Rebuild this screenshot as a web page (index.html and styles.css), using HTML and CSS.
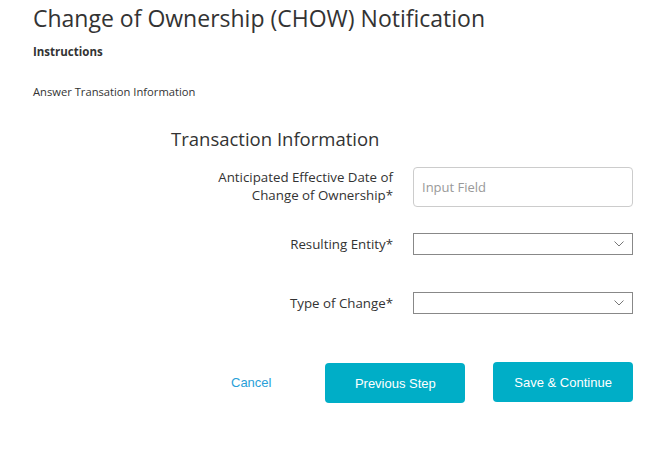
FILE: index.html
```html
<!DOCTYPE html>
<html>
<head>
<meta charset="utf-8">
<link rel="stylesheet" href="styles.css">
</head>
<body>
<div class="page">
  <h1 class="title">Change of Ownership (CHOW) Notification</h1>
  <div class="instructions">Instructions</div>
  <div class="subtitle">Answer Transation Information</div>
  <div class="form">
    <h2 class="section">Transaction Information</h2>
    <div class="row row-input">
      <label class="label">Anticipated Effective Date of<br>Change of Ownership*</label>
      <div class="field"><input class="input" type="text" placeholder="Input Field"></div>
    </div>
    <div class="row row-select">
      <label class="label">Resulting Entity*</label>
      <div class="field"><div class="select"><svg class="chev" width="10" height="6" viewBox="0 0 10 6"><path d="M0.5 0.5 L5 5 L9.5 0.5" fill="none" stroke="#777" stroke-width="1"/></svg></div></div>
    </div>
    <div class="row row-select">
      <label class="label">Type of Change*</label>
      <div class="field"><div class="select"><svg class="chev" width="10" height="6" viewBox="0 0 10 6"><path d="M0.5 0.5 L5 5 L9.5 0.5" fill="none" stroke="#777" stroke-width="1"/></svg></div></div>
    </div>
    <div class="actions">
      <a class="cancel">Cancel</a>
      <button class="btn btn-prev">Previous Step</button>
      <button class="btn btn-save">Save &amp; Continue</button>
    </div>
  </div>
</div>
</body>
</html>
```
FILE: styles.css
```css
* { box-sizing: border-box; }
body {
  margin: 0;
  font-family: "Open Sans", "Noto Sans", sans-serif;
  color: #333;
  background: #fff;
}
.page { padding: 3px 0 0 33px; }
.title {
  margin: 0;
  font-weight: 400;
  font-size: 23px;
  line-height: 30px;
  color: #333;
}
.instructions {
  margin-top: 11px;
  font-size: 11.5px;
  font-weight: 700;
  line-height: 16px;
}
.subtitle {
  margin-top: 25px;
  font-size: 11.2px;
  line-height: 14px;
}
.form {
  width: 462px;
  margin: 27px 0 0 138px;
}
.section {
  margin: 0;
  font-weight: 400;
  font-size: 18.5px;
  line-height: 26px;
  color: #333;
}
.row {
  display: grid;
  grid-template-columns: 222px 220px;
  column-gap: 20px;
  align-items: center;
}
.row-input { margin-top: 15px; }
.row-select { margin-top: 26px; }
.row-select + .row-select { margin-top: 37px; }
.label {
  text-align: right;
  font-size: 13.3px;
  line-height: 18px;
}
.row-input .label { margin-top: -2px; }
.input {
  display: block;
  width: 220px;
  height: 40px;
  border: 1px solid #ccc;
  border-radius: 4px;
  padding: 0 8px;
  font-family: inherit;
  font-size: 13px;
  color: #333;
}
.input::placeholder { color: #999; }
.select {
  position: relative;
  width: 220px;
  height: 22px;
  border: 1px solid #888;
}
.chev {
  position: absolute;
  right: 8px;
  top: 7px;
}
.actions {
  display: flex;
  align-items: center;
  margin-top: 47px;
}
.cancel {
  margin-left: 60px;
  font-family: "Liberation Sans", Arial, sans-serif;
  font-size: 13px;
  color: #2a9fd8;
}
.btn {
  width: 140px;
  height: 40px;
  border: none;
  border-radius: 4px;
  background: #00aec7;
  color: #fff;
  font-family: "Liberation Sans", Arial, sans-serif;
  font-size: 13px;
}
.btn-prev { margin-left: 54px; margin-top: 2px; }
.btn-save { margin-left: 28px; }
```
